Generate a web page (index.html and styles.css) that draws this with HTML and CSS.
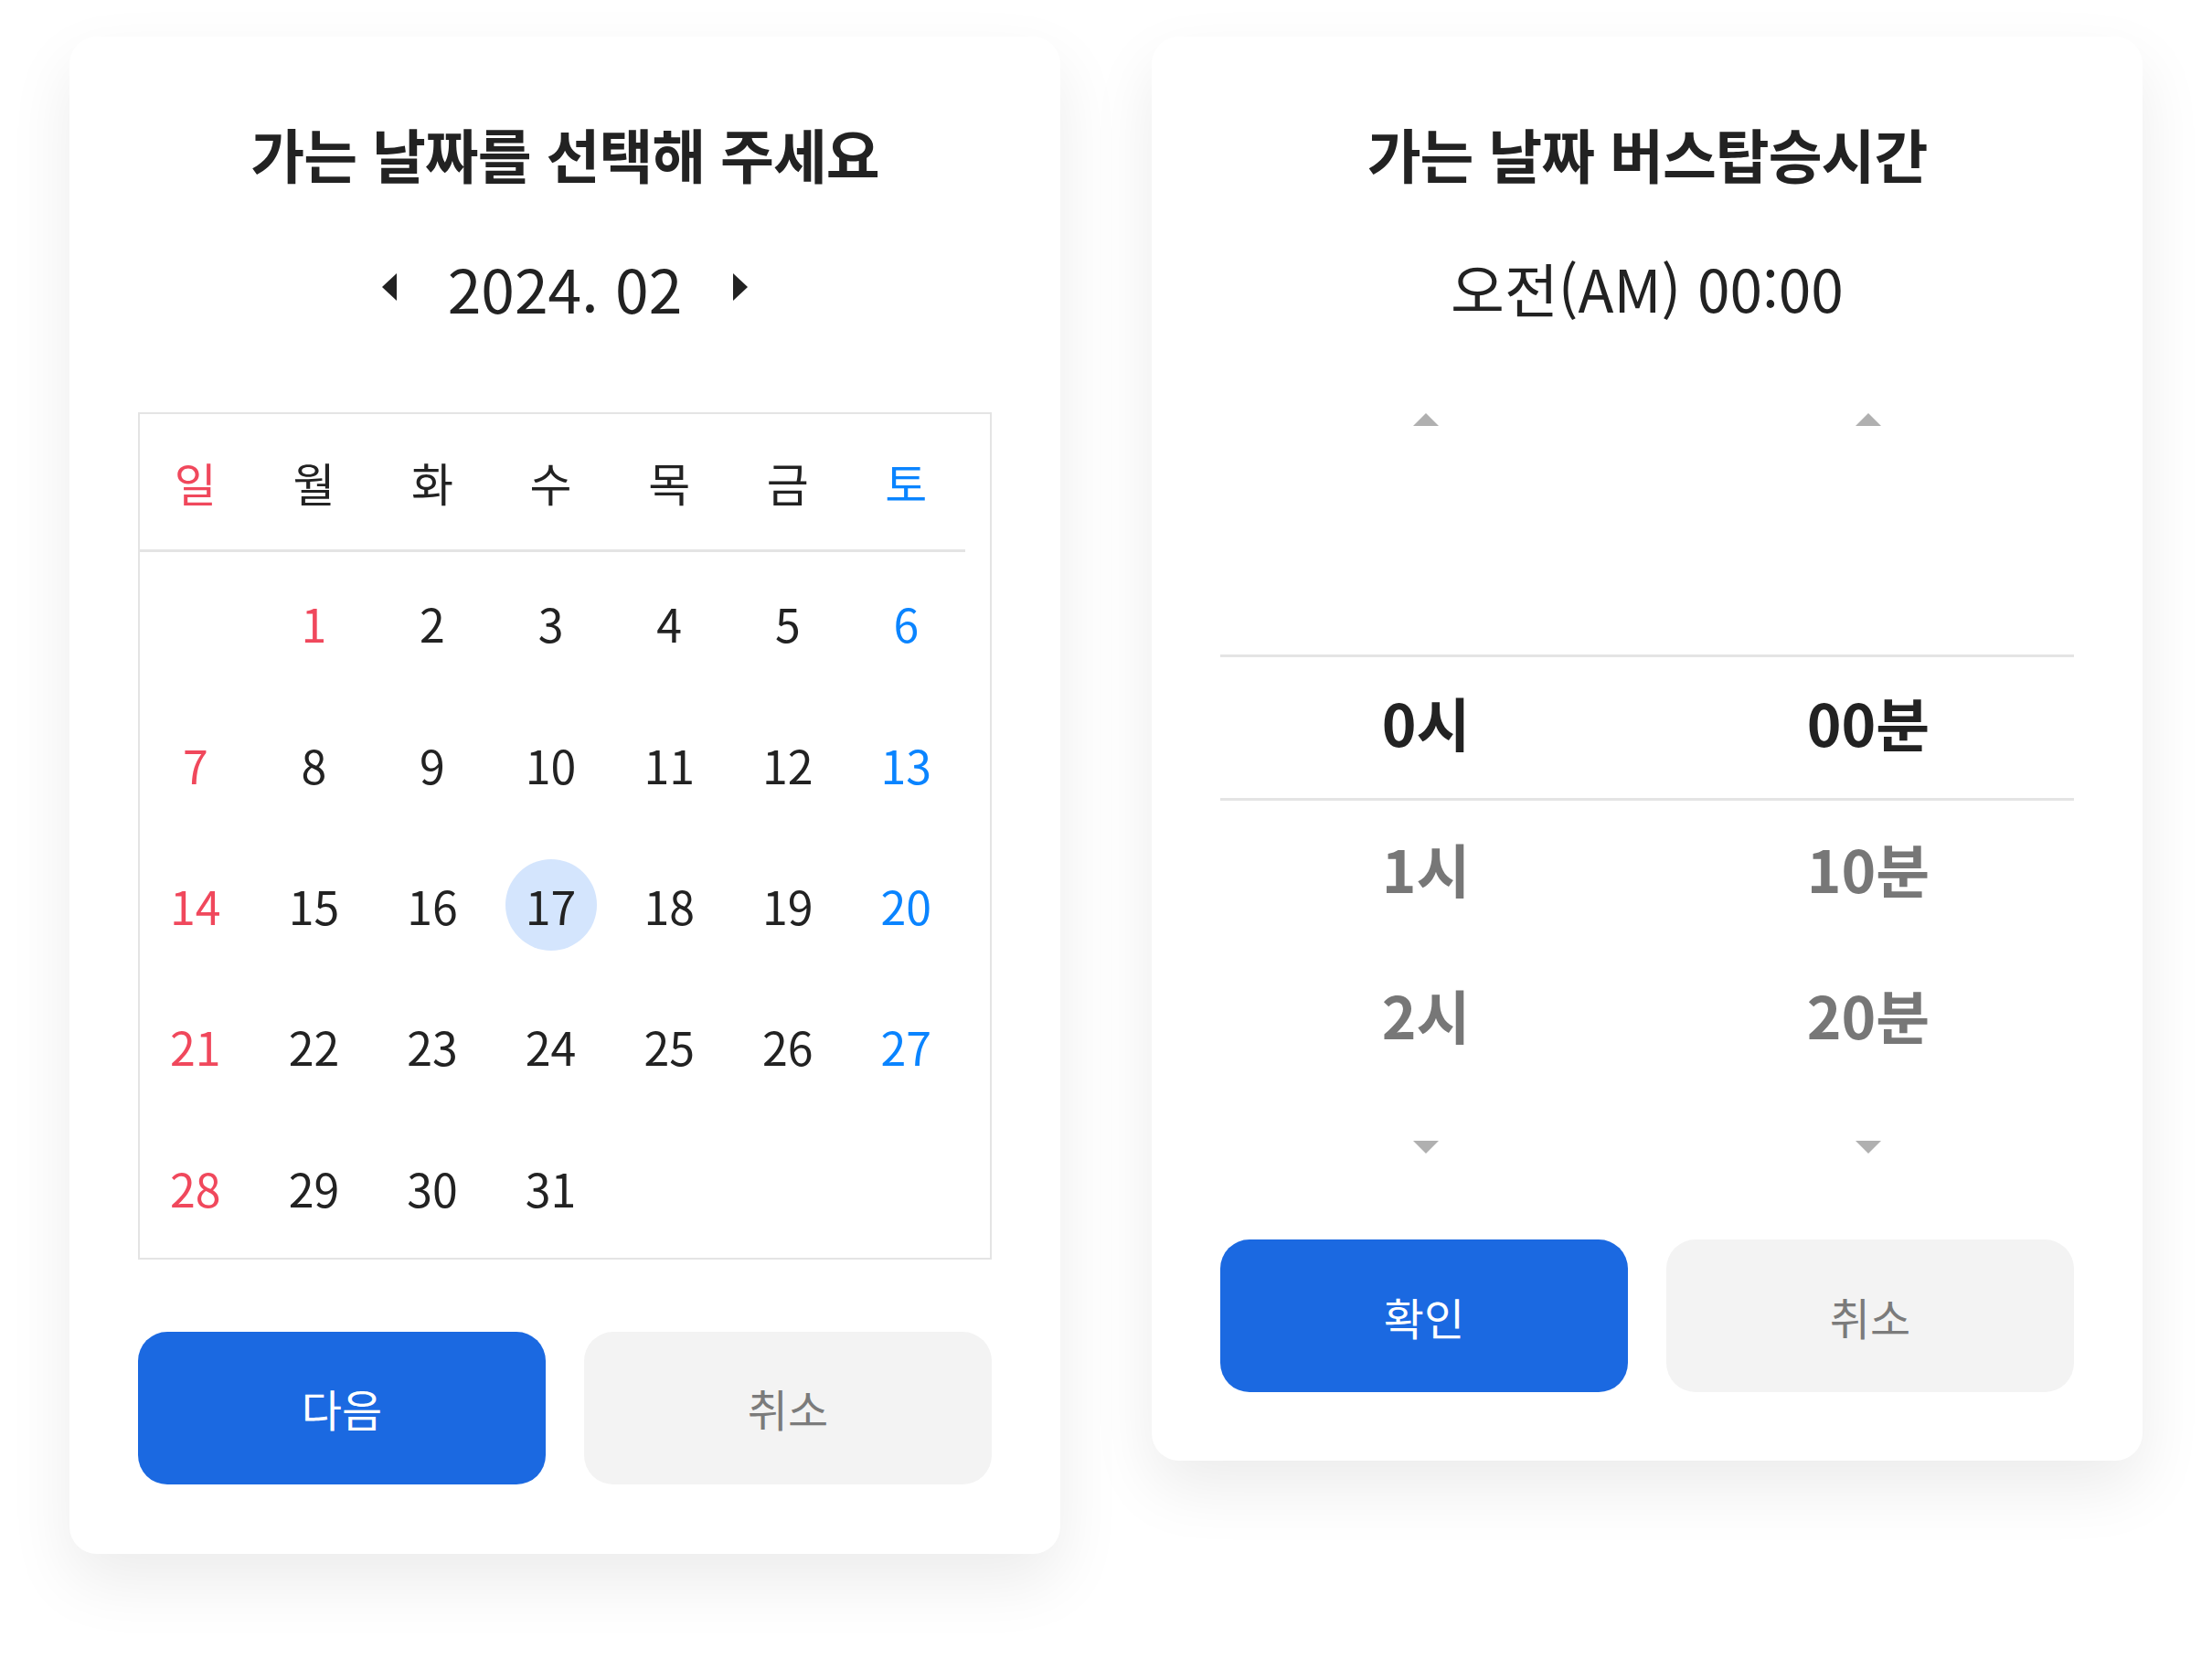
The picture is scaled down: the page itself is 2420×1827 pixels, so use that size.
FILE: index.html
```html
<!DOCTYPE html>
<html lang="ko">
<head>
    <meta charset="UTF-8">
    <meta name="viewport" content="width=device-width, initial-scale=1.0">
    <title>가는 날짜 선택</title>
    <link rel="stylesheet" href="styles.css">
</head>
<body>

    <div class="wrap">

        <!-- 날짜 선택 -->
        <div class="card">
            <h2 class="title">가는 날짜를 선택해 주세요</h2>

            <div class="month">
                <span class="arrow-prev"></span>
                <span class="month-label">2024. 02</span>
                <span class="arrow-next"></span>
            </div>

            <div class="calendar">
                <div class="week">
                    <div class="sun">일</div>
                    <div>월</div>
                    <div>화</div>
                    <div>수</div>
                    <div>목</div>
                    <div>금</div>
                    <div class="sat">토</div>
                </div>
                <div class="days">
                    <div></div>
                    <div class="sun">1</div>
                    <div>2</div>
                    <div>3</div>
                    <div>4</div>
                    <div>5</div>
                    <div class="sat">6</div>

                    <div class="sun">7</div>
                    <div>8</div>
                    <div>9</div>
                    <div>10</div>
                    <div>11</div>
                    <div>12</div>
                    <div class="sat">13</div>

                    <div class="sun">14</div>
                    <div>15</div>
                    <div>16</div>
                    <div class="picked"><span>17</span></div>
                    <div>18</div>
                    <div>19</div>
                    <div class="sat">20</div>

                    <div class="sun">21</div>
                    <div>22</div>
                    <div>23</div>
                    <div>24</div>
                    <div>25</div>
                    <div>26</div>
                    <div class="sat">27</div>

                    <div class="sun">28</div>
                    <div>29</div>
                    <div>30</div>
                    <div>31</div>
                    <div></div>
                    <div></div>
                    <div></div>
                </div>
            </div>

            <div class="buttons">
                <button class="btn btn-primary">다음</button>
                <button class="btn btn-cancel">취소</button>
            </div>
        </div>

        <!-- 버스 탑승시간 -->
        <div class="card card-time">
            <h2 class="title">가는 날짜 버스탑승시간</h2>

            <p class="now">오전(AM) 00:00</p>

            <div class="picker">
                <div class="picker-row arrows arrows-up">
                    <span class="arrow-up"></span>
                    <span class="arrow-up"></span>
                </div>

                <div class="picker-row wheel-row">
                    <div></div>
                    <div></div>
                </div>
                <div class="picker-row wheel-row current">
                    <div>0시</div>
                    <div>00분</div>
                </div>
                <div class="picker-row wheel-row">
                    <div>1시</div>
                    <div>10분</div>
                </div>
                <div class="picker-row wheel-row">
                    <div>2시</div>
                    <div>20분</div>
                </div>

                <div class="picker-row arrows arrows-down">
                    <span class="arrow-down"></span>
                    <span class="arrow-down"></span>
                </div>
            </div>

            <div class="buttons buttons-time">
                <button class="btn btn-primary">확인</button>
                <button class="btn btn-cancel">취소</button>
            </div>
        </div>

    </div>

</body>
</html>
```

FILE: styles.css
```css
*{
    margin: 0;
    padding: 0;
    box-sizing: border-box;
}
body{
    font-family: "Noto Sans CJK KR", "Noto Sans", sans-serif;
    color: #222222;
    background: #ffffff;
}
.wrap{
    display: flex;
    align-items: flex-start;
    gap: 100px;
    min-height: 100vh;
    padding: 40px 76px;
}
.card{
    width: 1084px;
    background: #ffffff;
    border-radius: 30px;
    box-shadow: 0 30px 70px rgba(0, 0, 0, 0.08);
    padding: 82px 75px 76px;
}
.card-time{
    padding-bottom: 75px;
}
.title{
    font-size: 64px;
    font-weight: 700;
    line-height: 90px;
    letter-spacing: -1px;
    text-align: center;
}

/* 년월 이동 */
.month{
    display: flex;
    justify-content: center;
    align-items: center;
    gap: 56px;
    height: 90px;
    margin-top: 57px;
}
.month-label{
    font-size: 66px;
    line-height: 90px;
}
.arrow-prev,
.arrow-next{
    width: 0;
    height: 0;
    border-top: 15px solid transparent;
    border-bottom: 15px solid transparent;
}
.arrow-prev{
    border-right: 16px solid #222222;
}
.arrow-next{
    border-left: 16px solid #222222;
}

/* 달력 */
.calendar{
    margin-top: 92px;
    border: 2px solid #e4e4e4;
}
.week,
.days{
    display: grid;
    grid-template-columns: repeat(7, 129.6px);
    font-size: 50px;
}
.week{
    width: 903px;
    height: 151px;
    border-bottom: 3px solid #e4e4e4;
}
.week div,
.days div{
    display: flex;
    justify-content: center;
    align-items: center;
    padding-right: 8px;
}
.days div{
    height: 154.4px;
}
.sun{
    color: #f0485c;
}
.sat{
    color: #0a84ff;
}
.days .picked span{
    display: flex;
    justify-content: center;
    align-items: center;
    width: 100px;
    height: 100px;
    border-radius: 50%;
    background: #d4e5fd;
}

/* 버튼 */
.buttons{
    display: grid;
    grid-template-columns: 1fr 1fr;
    gap: 42px;
    margin-top: 79px;
}
.buttons-time{
    margin-top: 94px;
}
.btn{
    height: 167px;
    border: 0;
    border-radius: 32px;
    font-family: inherit;
    font-size: 48px;
    cursor: pointer;
}
.btn-primary{
    background: #1b69e1;
    color: #ffffff;
}
.btn-cancel{
    background: #f3f3f3;
    color: #7b7b7b;
}

/* 시간 선택 */
.now{
    font-size: 64px;
    line-height: 90px;
    text-align: center;
    margin-top: 57px;
    font-feature-settings: "calt" 0;
}
.picker{
    margin-top: 93px;
}
.picker-row{
    display: grid;
    grid-template-columns: 1fr 1fr;
    column-gap: 34px;
    justify-items: center;
    align-items: center;
}
.arrows{
    height: 14px;
}
.arrows-up{
    margin-bottom: 90px;
}
.arrows-down{
    margin-top: 52px;
}
.arrow-up,
.arrow-down{
    width: 0;
    height: 0;
    border-left: 14px solid transparent;
    border-right: 14px solid transparent;
}
.arrow-up{
    border-bottom: 14px solid #b0b0b0;
}
.arrow-down{
    border-top: 14px solid #b0b0b0;
}
.wheel-row{
    height: 160px;
    padding-bottom: 14px;
    font-size: 64px;
    font-weight: 700;
    color: #777777;
}
.wheel-row.current{
    color: #222222;
    border-top: 3px solid #e4e4e4;
    border-bottom: 3px solid #e4e4e4;
}
```
